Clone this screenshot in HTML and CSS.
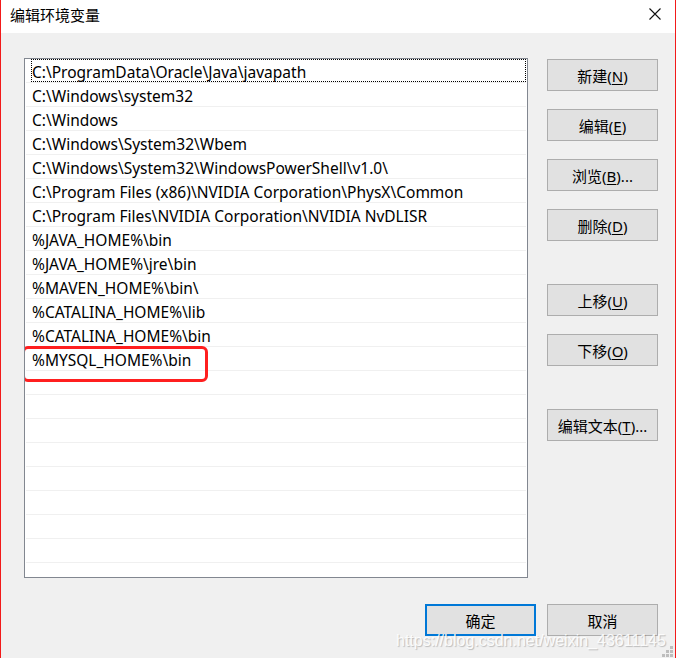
FILE: index.html
```html
<!DOCTYPE html>
<html lang="zh-CN">
<head>
    <meta charset="UTF-8">
    <title>编辑环境变量</title>
    <link rel="stylesheet" href="styles.css">
</head>
<body>
    <div class="window">
        <!-- Barra de título -->
        <div class="titlebar">
            <span class="title">编辑环境变量</span>
            <svg class="close" width="12" height="12" viewBox="0 0 12 12">
                <path d="M0.5 0.5 L11.5 11.5 M11.5 0.5 L0.5 11.5" stroke="#111" stroke-width="1.1" fill="none"/>
            </svg>
        </div>

        <div class="content">
            <div class="main">
                <!-- Lista de rutas -->
                <div class="list">
                    <div class="row"><div class="cell focus">C:\ProgramData\Oracle\Java\javapath</div></div>
                    <div class="row"><div class="cell">C:\Windows\system32</div></div>
                    <div class="row"><div class="cell">C:\Windows</div></div>
                    <div class="row"><div class="cell">C:\Windows\System32\Wbem</div></div>
                    <div class="row"><div class="cell">C:\Windows\System32\WindowsPowerShell\v1.0\</div></div>
                    <div class="row"><div class="cell">C:\Program Files (x86)\NVIDIA Corporation\PhysX\Common</div></div>
                    <div class="row"><div class="cell">C:\Program Files\NVIDIA Corporation\NVIDIA NvDLISR</div></div>
                    <div class="row"><div class="cell">%JAVA_HOME%\bin</div></div>
                    <div class="row"><div class="cell">%JAVA_HOME%\jre\bin</div></div>
                    <div class="row"><div class="cell">%MAVEN_HOME%\bin\</div></div>
                    <div class="row"><div class="cell">%CATALINA_HOME%\lib</div></div>
                    <div class="row"><div class="cell">%CATALINA_HOME%\bin</div></div>
                    <div class="row"><div class="cell">%MYSQL_HOME%\bin</div></div>
                    <div class="row"><div class="cell"></div></div>
                    <div class="row"><div class="cell"></div></div>
                    <div class="row"><div class="cell"></div></div>
                    <div class="row"><div class="cell"></div></div>
                    <div class="row"><div class="cell"></div></div>
                    <div class="row"><div class="cell"></div></div>
                    <div class="row"><div class="cell"></div></div>
                    <div class="row"><div class="cell"></div></div>
                    <!-- Marca roja sobre la nueva ruta -->
                    <div class="highlight"></div>
                </div>

                <!-- Botones laterales -->
                <div class="side">
                    <button class="btn">新建(<u>N</u>)</button>
                    <button class="btn">编辑(<u>E</u>)</button>
                    <button class="btn">浏览(<u>B</u>)...</button>
                    <button class="btn">删除(<u>D</u>)</button>
                    <button class="btn spaced">上移(<u>U</u>)</button>
                    <button class="btn">下移(<u>O</u>)</button>
                    <button class="btn spaced">编辑文本(<u>T</u>)...</button>
                </div>
            </div>

            <div class="footer">
                <button class="btn btn-default">确定</button>
                <button class="btn">取消</button>
            </div>

            <div class="watermark">https://blog.csdn.net/weixin_43611145</div>

            <svg class="grip" width="11" height="11" viewBox="0 0 11 11">
                <rect x="8" y="0" width="3" height="3" fill="#bdbdbd"/>
                <rect x="4" y="4" width="3" height="3" fill="#bdbdbd"/>
                <rect x="8" y="4" width="3" height="3" fill="#bdbdbd"/>
                <rect x="0" y="8" width="3" height="3" fill="#bdbdbd"/>
                <rect x="4" y="8" width="3" height="3" fill="#bdbdbd"/>
                <rect x="8" y="8" width="3" height="3" fill="#bdbdbd"/>
            </svg>
        </div>
    </div>
</body>
</html>
```

FILE: styles.css
```css
/* Estilos base */
body {
    margin: 0;
    background-color: #fff;
    font-family: 'Noto Sans', 'Noto Sans CJK SC', sans-serif;
    font-size: 15px;
    color: #000;
}

/* Ventana */
.window {
    width: 676px;
    height: 658px;
    box-sizing: border-box;
    border-left: 1px solid #f21a1a;
    border-right: 1px solid #f21a1a;
    display: flex;
    flex-direction: column;
}

/* Barra de título */
.titlebar {
    height: 33px;
    flex-shrink: 0;
    background-color: #fff;
    display: flex;
    justify-content: space-between;
    align-items: flex-start;
    padding: 0 14px 0 9px;
}

.title {
    font-family: 'Noto Sans CJK SC', sans-serif;
    font-size: 15px;
    line-height: 30px;
}

.close {
    margin-top: 8px;
}

/* Zona de contenido */
.content {
    flex: 1;
    position: relative;
    background-color: #f0f0f0;
    padding: 25px 0 0 23px;
}

.main {
    display: flex;
    align-items: flex-start;
}

/* Lista */
.list {
    position: relative;
    width: 504px;
    height: 520px;
    box-sizing: border-box;
    border: 1px solid #828790;
    background-color: #fff;
    padding: 0 1px;
    overflow: hidden;
}

.row {
    height: 24px;
    box-sizing: border-box;
    border-bottom: 1px solid #f0f0f0;
}

.cell {
    margin-left: 5px;
    height: 23px;
    padding-left: 1px;
    line-height: 27px;
    font-size: 15.5px;
    white-space: nowrap;
}

.focus {
    outline: 1px dotted #000;
    outline-offset: -1px;
}

.highlight {
    position: absolute;
    left: -3px;
    top: 287px;
    width: 186px;
    height: 36px;
    box-sizing: border-box;
    border: 3px solid #ff1f1f;
    border-radius: 6px;
}

/* Botones */
.side {
    display: flex;
    flex-direction: column;
    gap: 18px;
    margin-left: 19px;
    padding-top: 1px;
}

.spaced {
    margin-top: 25px;
}

.btn {
    width: 111px;
    height: 32px;
    box-sizing: border-box;
    border: 1px solid #adadad;
    background-color: #e1e1e1;
    font-family: 'Noto Sans', 'Noto Sans CJK SC', sans-serif;
    font-size: 15px;
    color: #000;
    padding: 0;
}

.btn u {
    text-underline-offset: 2px;
}

.btn-default {
    border: 2px solid #0078d7;
}

.footer {
    display: flex;
    justify-content: flex-end;
    gap: 11px;
    margin-top: 26px;
    padding-right: 17px;
}

/* Marca de agua */
.watermark {
    position: absolute;
    left: 395px;
    top: 599px;
    font-family: 'Liberation Sans', sans-serif;
    font-size: 16px;
    color: rgba(255, 255, 255, 0.9);
    text-shadow: 1px 1px 1px rgba(0, 0, 0, 0.22);
    white-space: nowrap;
}

.grip {
    position: absolute;
    right: 2px;
    bottom: 1px;
}
```
